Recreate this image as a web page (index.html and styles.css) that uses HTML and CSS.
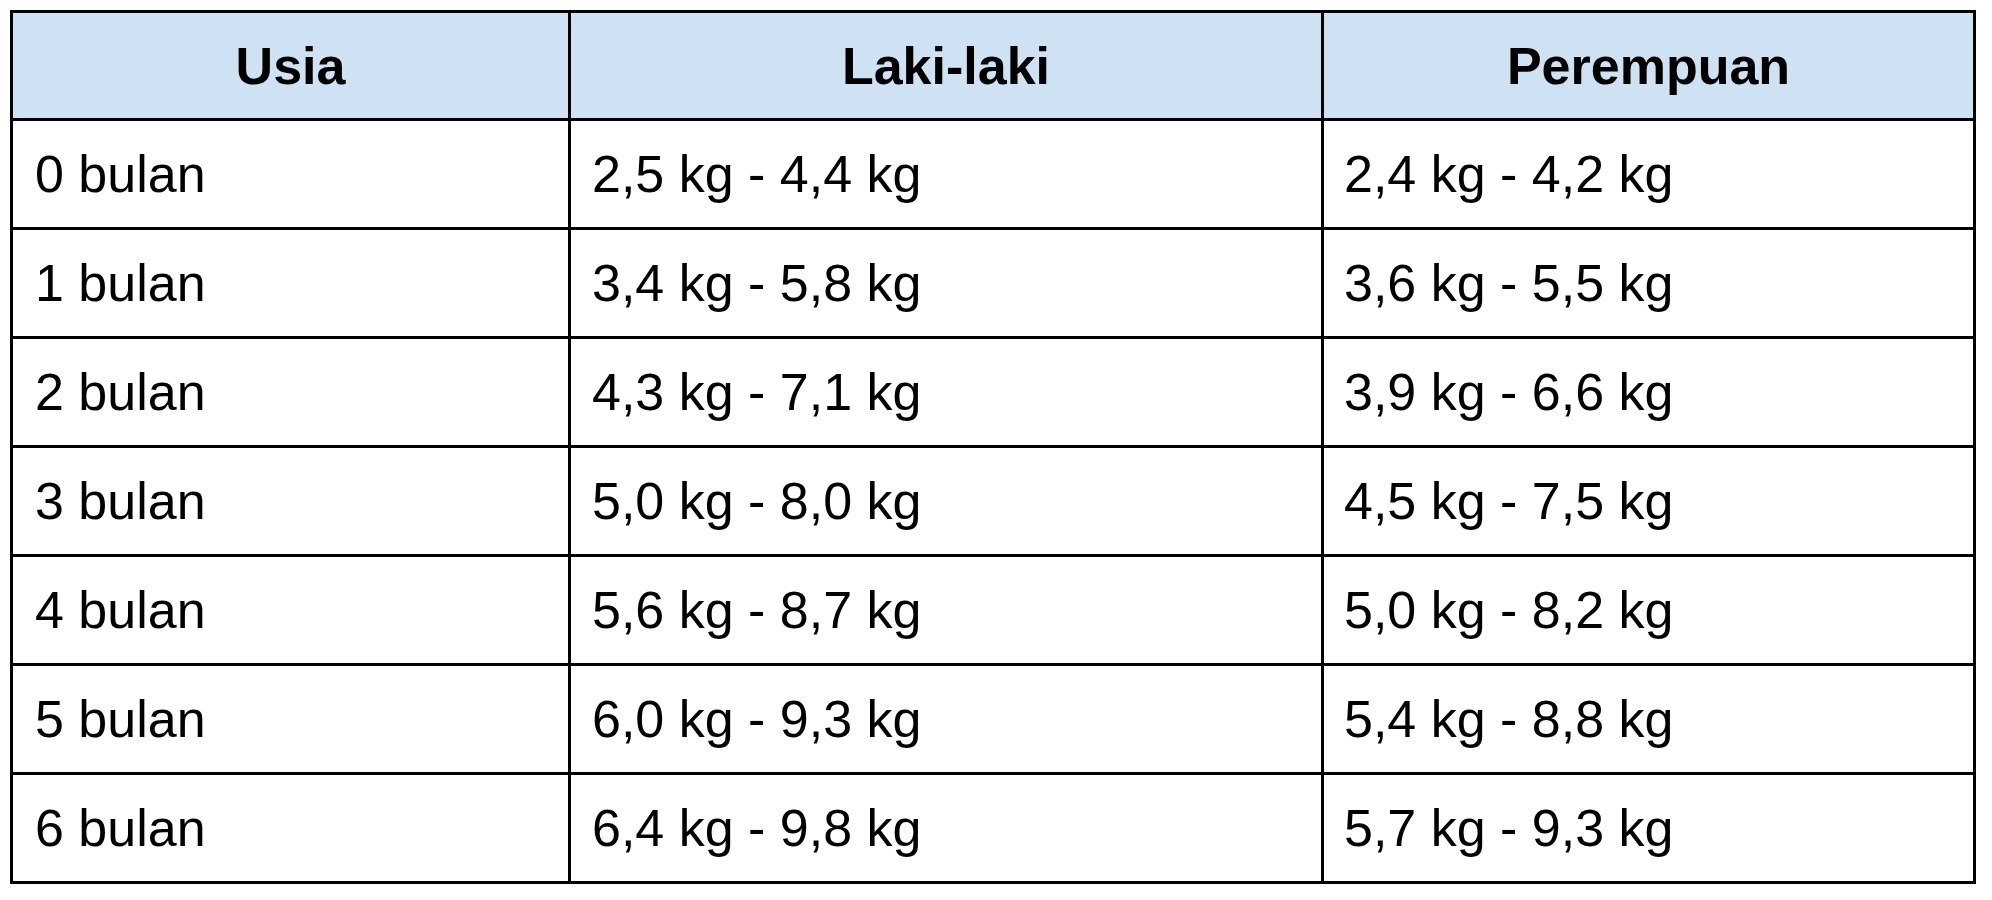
FILE: index.html
```html
<!DOCTYPE html>
<html lang="id">
<head>
<meta charset="utf-8">
<title>Berat badan bayi</title>
<link rel="stylesheet" href="styles.css">
</head>
<body>
<div class="wrap">
  <div class="table" role="table">
    <div class="cell head c1">Usia</div>
    <div class="cell head c2">Laki-laki</div>
    <div class="cell head c3">Perempuan</div>

    <div class="cell c1">0 bulan</div>
    <div class="cell c2">2,5 kg - 4,4 kg</div>
    <div class="cell c3">2,4 kg - 4,2 kg</div>

    <div class="cell c1">1 bulan</div>
    <div class="cell c2">3,4 kg - 5,8 kg</div>
    <div class="cell c3">3,6 kg - 5,5 kg</div>

    <div class="cell c1">2 bulan</div>
    <div class="cell c2">4,3 kg - 7,1 kg</div>
    <div class="cell c3">3,9 kg - 6,6 kg</div>

    <div class="cell c1">3 bulan</div>
    <div class="cell c2">5,0 kg - 8,0 kg</div>
    <div class="cell c3">4,5 kg - 7,5 kg</div>

    <div class="cell c1">4 bulan</div>
    <div class="cell c2">5,6 kg - 8,7 kg</div>
    <div class="cell c3">5,0 kg - 8,2 kg</div>

    <div class="cell c1">5 bulan</div>
    <div class="cell c2">6,0 kg - 9,3 kg</div>
    <div class="cell c3">5,4 kg - 8,8 kg</div>

    <div class="cell c1">6 bulan</div>
    <div class="cell c2">6,4 kg - 9,8 kg</div>
    <div class="cell c3">5,7 kg - 9,3 kg</div>
  </div>
</div>
</body>
</html>
```

FILE: styles.css
```css
html, body {
  margin: 0;
  padding: 0;
  background: #ffffff;
}

.wrap {
  padding: 10px 0 0 10px;
}

.table {
  display: grid;
  grid-template-columns: 558px 753px 652px;
  grid-template-rows: 108px repeat(7, 109px);
  width: max-content;
  border-top: 3px solid #000;
  border-left: 3px solid #000;
  font-family: "Liberation Sans", Arial, sans-serif;
  font-size: 52px;
  color: #000;
}

.cell {
  box-sizing: border-box;
  border-right: 3px solid #000;
  border-bottom: 3px solid #000;
  display: flex;
  align-items: center;
  padding-left: 21px;
  white-space: nowrap;
  background: #fff;
}

.cell.c1 {
  padding-left: 22px;
}

.cell.c3 {
  padding-left: 20px;
}

.cell.head {
  background: #cfe2f3;
  font-weight: bold;
  justify-content: center;
  padding-left: 0;
}
```
